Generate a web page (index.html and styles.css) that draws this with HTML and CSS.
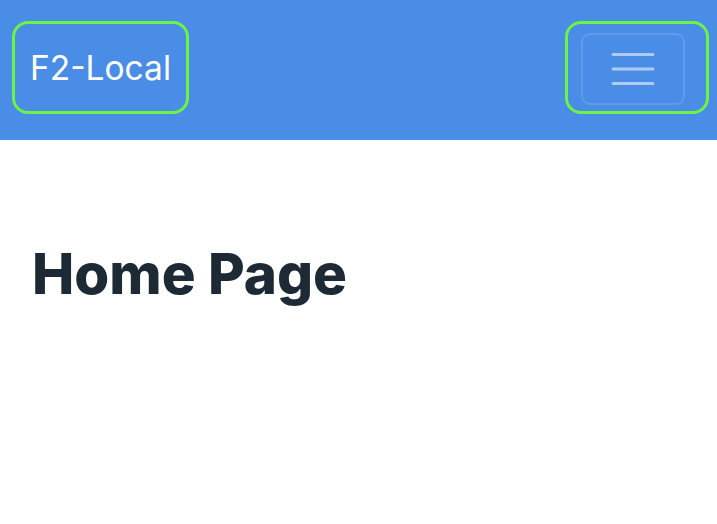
FILE: index.html
```html
<!DOCTYPE html>
<html>
<head>
    <title>F2-Local</title>
    <link rel="stylesheet" href="styles.css">
</head>
<body>
    <header class="navbar">
        <div class="focus-ring brand-ring">
            <a class="brand" href="#">F2-Local</a>
        </div>
        <div class="focus-ring toggler-ring">
            <button class="toggler" type="button" aria-label="Toggle navigation">
                <span class="toggler-icon">
                    <svg width="44" height="32" viewBox="0 0 44 32">
                        <path d="M2 1.5h40M2 16h40M2 30.5h40" stroke="rgba(255,255,255,0.55)" stroke-width="3" stroke-linecap="round"/>
                    </svg>
                </span>
            </button>
        </div>
    </header>
    <main class="content">
        <h1>Home Page</h1>
    </main>
</body>
</html>
```

FILE: styles.css
```css
body { margin: 0; font-family: Inter, "Noto Sans", sans-serif; background: #fff; }
.navbar {
    height: 140px;
    background: #4a8de6;
    display: flex;
    justify-content: space-between;
    align-items: center;
    padding: 0 8px 6px 12px;
    box-sizing: border-box;
}
.focus-ring {
    border: 3px solid #6cf442;
    border-radius: 16px;
    height: 93px;
    box-sizing: border-box;
    display: flex;
    align-items: center;
    justify-content: center;
}
.brand-ring { width: 177px; }
.toggler-ring {
    width: 144px;
    justify-content: flex-start;
    padding-left: 13px;
}
.brand {
    color: #fff;
    text-decoration: none;
    font-size: 33.5px;
    font-weight: 400;
    margin-top: 2px;
}
.toggler {
    width: 104px;
    height: 72px;
    margin-top: 4px;
    background: transparent;
    border: 2px solid rgba(255, 255, 255, 0.12);
    border-radius: 9px;
    display: flex;
    align-items: center;
    justify-content: center;
    padding: 0;
}
.toggler-icon { display: block; line-height: 0; }
.content { padding: 0 32px; }
.content h1 {
    margin: 0;
    padding-top: 100px;
    font-size: 56.5px;
    font-weight: 800;
    color: #1e2936;
    letter-spacing: 0;
    line-height: 1.2;
}
```
